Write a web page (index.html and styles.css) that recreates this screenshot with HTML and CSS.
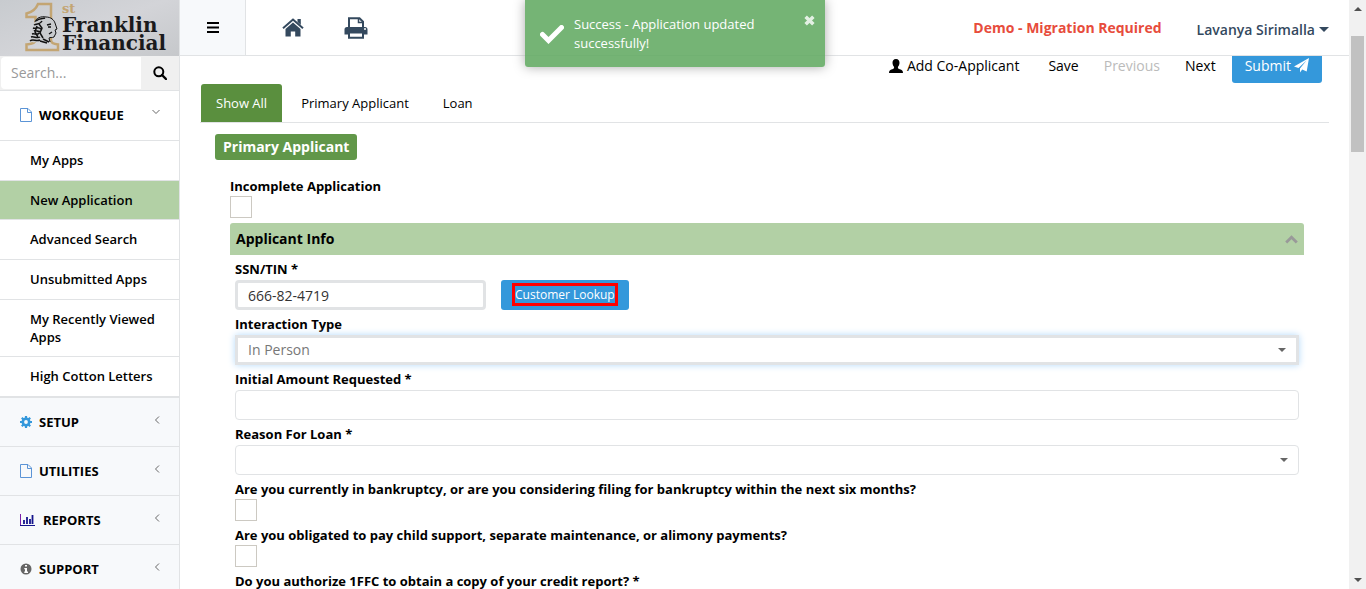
FILE: index.html
```html
<!DOCTYPE html>
<html lang="en">
<head>
<meta charset="utf-8">
<title>New Application</title>
<link rel="stylesheet" href="styles.css">
</head>
<body>
<svg class="sprite" aria-hidden="true">
  <symbol id="i-file" viewBox="0 0 12 14"><path d="M.5.5h7.500l3.500 3.500v9.500h-11z M7.500.5v4h4" fill="none" stroke="currentColor"/></symbol>
  <symbol id="i-left" viewBox="0 0 6 8"><path d="M5 .5L1.500 4 5 7.500" fill="none" stroke="currentColor"/></symbol>
  <symbol id="i-caret" viewBox="0 0 8 4"><path d="M0 0h8L4 4z" fill="currentColor"/></symbol>
</svg>
<div class="app">
  <aside class="sidebar">
    <a class="logo" href="#">
      <svg class="logo-mark" viewBox="0 0 35 50" aria-hidden="true">
        <path d="M1.500 11.500C6 10.500 11 7 13 2h13v36c0 3 2 4 7 4.500v5.500H1.500v-5.500c6-.5 9-1.500 9-4.500V15h-9z" fill="none" stroke="#c3a573" stroke-width="2.500"/>
        <path d="M10 20c1-4 6-6 11-5 5 0 9 3 9 7l2 5-2 1 1 3-2 4c-2 1-4 0-5 1l1 4c-4 2-9 0-12-1-3 2-7 2-7-1 1-2-1-3 1-5-1-2 1-4 0-6 1-2 1-5 3-7z" fill="#c9cbce"/>
        <path d="M10 20c1-4 6-6 11-5 5 0 8 3 9 6l2 6-2 1 1 3-2 4c-2 1-4 0-5 1l1 4" fill="none" stroke="#111"/>
        <path d="M11 19c3-3 7-2 9-3M9 23c3-2 6 0 8-4M8 26c3 1 5-2 8 1M9 29c2-2 4 2 7 0M7 32c3-1 5 2 7-1M6 35c3-1 6 2 9 0M5 39c3-3 6 1 10-1M14 22l3 4-2 5 3 5M12 24l-2 6 3 5M22 23l4-1M23 25h3M27 30l-3 2M18 37l6 3M15 39l7 2" fill="none" stroke="#111" stroke-width="1.500"/>
      </svg>
      <span class="logo-text"><span class="logo-st">st</span><span>Franklin</span><span>Financial</span></span>
    </a>
    <form class="search">
      <input class="search-input" type="text" placeholder="Search..." aria-label="Search">
      <button class="search-btn" type="button" aria-label="Search">
        <svg width="14" height="14" viewBox="0 0 14 14"><circle cx="5.800" cy="5.800" r="4.500" fill="none" stroke="#000" stroke-width="2"/><path d="M9 9l4 4" stroke="#000" stroke-width="2.400" stroke-linecap="round"/></svg>
      </button>
    </form>
    <nav class="menu">
      <a class="group open" href="#"><svg class="blue" width="12" height="14"><use href="#i-file"/></svg><span>WORKQUEUE</span>
        <svg class="chev" width="8" height="6" viewBox="0 0 8 6"><path d="M.5 1L4 4.500 7.500 1" fill="none" stroke="currentColor"/></svg></a>
      <div class="items">
        <a class="item" href="#">My Apps</a>
        <a class="item active" href="#">New Application</a>
        <a class="item" href="#">Advanced Search</a>
        <a class="item" href="#">Unsubmitted Apps</a>
        <a class="item" href="#">My Recently Viewed Apps</a>
        <a class="item" href="#">High Cotton Letters</a>
      </div>
      <a class="group" href="#"><svg class="cog" width="12" height="12" viewBox="0 0 12 12"><circle cx="6" cy="6" r="3.200" fill="none" stroke="currentColor" stroke-width="2.600"/><path d="M6 0v2.500M6 9.500V12M0 6h2.500M9.500 6H12M1.800 1.800l1.700 1.700M8.500 8.500l1.700 1.700M1.800 10.200l1.700-1.700M8.500 3.500l1.700-1.700" stroke="currentColor" stroke-width="2.200"/></svg><span>SETUP</span><svg class="chev" width="6" height="8"><use href="#i-left"/></svg></a>
      <a class="group" href="#"><svg class="blue" width="12" height="14"><use href="#i-file"/></svg><span>UTILITIES</span><svg class="chev" width="6" height="8"><use href="#i-left"/></svg></a>
      <a class="group" href="#"><svg class="navy" width="16" height="12" viewBox="0 0 16 12"><path d="M.5 0v11.500" stroke="#7a1fa8"/><path d="M0 11.500h15" stroke="currentColor"/><path d="M4 10V6M7 10V3M10 10V5M12.500 10V1" stroke="currentColor" stroke-width="1.800"/></svg><span>REPORTS</span><svg class="chev" width="6" height="8"><use href="#i-left"/></svg></a>
      <a class="group" href="#"><svg class="gray" width="12" height="12" viewBox="0 0 12 12"><circle cx="6" cy="6" r="5.500" fill="currentColor"/><path d="M5 2h2v1.600H5zM4.300 5H7v3.500h1V10H4.300V8.500H5V6.300h-.7z" fill="#fff"/></svg><span>SUPPORT</span><svg class="chev" width="6" height="8"><use href="#i-left"/></svg></a>
    </nav>
  </aside>

  <div class="main">
    <header class="topbar">
      <button class="burger" type="button" aria-label="Toggle menu"><svg width="12" height="11" viewBox="0 0 12 11"><path d="M0 1h12M0 5.500h12M0 10h12" stroke="#000" stroke-width="2"/></svg></button>
      <a class="top-icon" href="#" aria-label="Home"><svg width="22" height="19" viewBox="0 0 22 19"><path d="M15.500 1h3.300v6l-3.300-3z" fill="currentColor"/><path d="M1 10.200L11 1.600l10 8.600" fill="none" stroke="currentColor" stroke-width="2"/><path d="M11 4.500l7.500 6.400V18.500h-5.300v-5H8.800v5H3.500v-7.600z" fill="currentColor"/></svg></a>
      <a class="top-icon" href="#" aria-label="Print"><svg width="24" height="22" viewBox="0 0 24 22"><path d="M5 10V1.200h10.500L19 4.700V10" fill="none" stroke="currentColor" stroke-width="2"/><path d="M14.500 1v4.500H19" fill="none" stroke="currentColor" stroke-width="1.500"/><path d="M3 10h18a2.500 2.500 0 0 1 2.500 2.500V17.500H19V15H5v2.500H.5v-5A2.500 2.500 0 0 1 3 10z" fill="currentColor"/><circle cx="21" cy="12" r="1" fill="#fff"/><path d="M5 15.500h14v5.300H5z" fill="#fff" stroke="currentColor" stroke-width="2"/></svg></a>
      <strong class="env">Demo - Migration Required</strong>
      <button class="user" type="button">Lavanya Sirimalla <svg width="10" height="5"><use href="#i-caret"/></svg></button>
    </header>

    <div class="content">
      <div class="toolbar">
        <button class="tool add" type="button"><svg width="14" height="14" viewBox="0 0 14 14"><path d="M7 0c2.500 0 3.600 1.700 3.500 4-.1 2-1 3-1.600 4 0 1.500.5 1.800 2 2.300 2 .6 3.100 1.200 3.100 3.700H0c0-2.500 1.100-3.100 3.100-3.700 1.500-.5 2-.8 2-2.300-.6-1-1.500-2-1.600-4C3.400 1.700 4.500 0 7 0z"/></svg>Add Co-Applicant</button>
        <button class="tool" type="button">Save</button>
        <button class="tool" type="button" disabled>Previous</button>
        <button class="tool" type="button">Next</button>
        <button class="tool submit" type="button">Submit<svg width="15" height="15" viewBox="0 0 15 15"><path d="M15 0l-2.300 13.500-4.500-2L6 14.500v-4l6.500-8L4.500 10 0 8.500z" fill="#fff"/></svg></button>
      </div>
      <div class="tabs" role="tablist">
        <button class="tab active" role="tab" type="button">Show All</button>
        <button class="tab" role="tab" type="button">Primary Applicant</button>
        <button class="tab" role="tab" type="button">Loan</button>
      </div>
      <h1 class="badge">Primary Applicant</h1>
      <form class="form">
        <div class="field tick"><label for="inc">Incomplete Application</label><input class="check" id="inc" type="checkbox"></div>
        <section>
          <h2 class="panel-head">Applicant Info
            <svg width="13" height="9" viewBox="0 0 13 9"><path d="M1.200 7.500l5.300-5.300 5.300 5.300" fill="none" stroke="#999" stroke-width="2.800"/></svg></h2>
          <div class="panel">
            <div class="field"><label for="ssn">SSN/TIN *</label>
              <div class="lookup-row"><input class="control strong" id="ssn" type="text" value="666-82-4719"><button class="lookup" type="button"><span>Customer Lookup</span></button></div></div>
            <div class="field"><label for="int">Interaction Type</label>
              <div class="select-wrap"><select class="control strong focus" id="int"><option>In Person</option></select><svg class="caret inset" width="8" height="4"><use href="#i-caret"/></svg></div></div>
            <div class="field"><label for="amt">Initial Amount Requested *</label><input class="control" id="amt" type="text"></div>
            <div class="field"><label for="rsn">Reason For Loan *</label>
              <div class="select-wrap"><select class="control" id="rsn"><option></option></select><svg class="caret" width="8" height="4"><use href="#i-caret"/></svg></div></div>
            <div class="field tick"><label for="bk">Are you currently in bankruptcy, or are you considering filing for bankruptcy within the next six months?</label><input class="check" id="bk" type="checkbox"></div>
            <div class="field tick"><label for="cs">Are you obligated to pay child support, separate maintenance, or alimony payments?</label><input class="check" id="cs" type="checkbox"></div>
            <div class="field tick"><label for="cr">Do you authorize 1FFC to obtain a copy of your credit report? *</label><input class="check" id="cr" type="checkbox"></div>
          </div>
        </section>
      </form>
    </div>
  </div>

  <div class="scrollbar" aria-hidden="true">
    <svg class="up" width="8" height="4"><use href="#i-caret"/></svg>
    <div class="thumb"></div>
    <svg class="down" width="8" height="4"><use href="#i-caret"/></svg>
  </div>

  <div class="toast" role="status">
    <svg width="24" height="19" viewBox="0 0 24 19"><path d="M2.500 9.500l6 6L21.500 2.500" fill="none" stroke="#fff" stroke-width="5" stroke-linecap="round"/></svg>
    <p>Success - Application updated successfully!</p>
    <button class="toast-close" type="button" aria-label="Close"><svg width="11" height="11" viewBox="0 0 10 10"><path d="M1.500 1.500l7 7M8.500 1.500l-7 7" stroke="#fff" stroke-width="3.200"/></svg></button>
  </div>
</div>
</body>
</html>
```

FILE: styles.css
```css
* { box-sizing: border-box; }
body {
  margin: 0;
  font: 13px/18px "Open Sans", "Noto Sans", sans-serif;
  color: #000;
  background: #fff;
}
a { color: inherit; text-decoration: none; }
button, input, select { font: inherit; color: inherit; margin: 0; }
button { border: 0; background: none; padding: 0; cursor: pointer; }
svg { display: block; flex: none; }
.sprite { position: absolute; width: 0; height: 0; }

.app { position: relative; display: flex; height: 100vh; overflow: hidden; }

/* sidebar */
.sidebar {
  flex: none;
  width: 180px;
  background: #f7f9fb;
  border-right: 1px solid #e1e3e5;
  overflow: hidden;
}
.logo {
  display: flex;
  height: 56px;
  gap: 2px;
  padding: 2px 0 0 25px;
  background: linear-gradient(160deg, #c8cbcf, #d3d4d8 50%, #c6c8cb);
}
.logo-mark { width: 35px; height: 50px; }
.logo-text {
  display: flex;
  flex-direction: column;
  font: bold 20px/18px "DejaVu Serif", serif;
  color: #1a1a1c;
}
.logo-st { font-size: 13px; line-height: 14px; color: #c3a573; }
.search { display: flex; height: 35px; background: #f0f0f0; border-bottom: 1px solid #e1e3e5; }
.search-input {
  flex: 1;
  min-width: 0;
  margin: 1px 0 1px 1px;
  padding: 0 10px;
  border: 0;
  border-radius: 4px 0 0 4px;
  background: #fff;
  font-size: 14px;
}
.search-input::placeholder { color: #999; opacity: 1; }
.search-btn { width: 38px; display: grid; place-items: center; }

.group {
  display: flex;
  align-items: center;
  gap: 7px;
  height: 49px;
  padding: 0 19px 0 20px;
  border-bottom: 1px solid #e1e3e5;
  font-weight: 700;
}
.group.open { height: 50px; padding-bottom: 2px; background: #fff; }
.chev { margin: 0 0 5px auto; color: #666; }
.blue { color: #5b94d6; }
.cog { color: #3498db; }
.navy { color: #14148c; }
.gray { color: #666; }
.items {
  display: flex;
  flex-direction: column;
  min-height: 257px;
  background: #fff;
  border-bottom: 1px solid #e1e3e5;
}
.item {
  flex: 1 1 auto;
  padding: 10px 20px 10px 30px;
  border-bottom: 1px solid #e1e3e5;
  font-weight: 600;
}
.item.active { background: #b2d0a5; }

/* top bar */
.main { flex: 1; min-width: 0; display: flex; flex-direction: column; }
.topbar {
  flex: none;
  display: flex;
  align-items: center;
  height: 56px;
  padding-right: 20px;
  border-bottom: 1px solid #e1e3e5;
  color: #34495e;
}
.burger {
  display: grid;
  place-items: center;
  width: 66px;
  height: 55px;
  margin-right: 36px;
  background: #f7f9fb;
  border-right: 1px solid #e1e3e5;
}
.top-icon { margin-right: 40px; }
.env { margin-left: auto; margin-right: 35px; color: #e74c3c; font-size: 14px; }
.user { display: flex; align-items: center; gap: 4px; padding-top: 4px; font-size: 14px; font-weight: 600; }

/* content */
.content { flex: 1; min-height: 0; overflow: hidden; padding: 0 20px; }
.toolbar { display: flex; justify-content: flex-end; margin-top: -8px; padding-right: 7px; gap: 1px; }
.tool {
  display: flex;
  align-items: center;
  gap: 4px;
  height: 35px;
  padding: 0 12px;
  font-size: 14px;
}
.tool:disabled { color: #bbb; }
.add { margin-right: 4px; }
.submit {
  gap: 3px;
  margin-left: 3px;
  padding: 0 13px;
  background: #3498db;
  color: #fff;
  border-radius: 3px;
}
.tabs { display: flex; gap: 4px; border-bottom: 1px solid #e1e3e5; padding: 1px 0 0 1px; }
.tab { height: 38px; padding: 0 15px; }
.tab.active { background: #5a8f3e; color: #fff; border-radius: 3px 3px 0 0; }
.badge {
  width: fit-content;
  margin: 11px 0 17px 15px;
  padding: 4px 8px;
  border-radius: 3px;
  background: #619749;
  color: #fff;
  font-size: 14px;
  line-height: 18px;
}
.form { padding: 0 25px 0 30px; }
.field { display: flex; flex-direction: column; gap: 2px; padding-bottom: 5px; }
.field.tick { gap: 1px; }
.field label { font-weight: 700; }
.check {
  appearance: none;
  width: 22px;
  height: 22px;
  border: 1px solid #ccc9c2;
  background: #fff;
}
.panel-head {
  display: flex;
  align-items: center;
  justify-content: space-between;
  height: 32px;
  margin: 0 0 5px;
  padding: 0 6px;
  border-radius: 3px 3px 0 0;
  background: #b2d0a5;
  font-size: 14px;
}
.panel { padding: 0 5px; }
.control {
  display: block;
  width: 100%;
  height: 30px;
  padding: 0 12px;
  border: 1px solid #e1e3e5;
  border-radius: 4px;
  background: #fff;
  color: #333;
  font-size: 14px;
  appearance: none;
}
.control.strong { border-width: 3px; padding: 0 10px; }
.control.focus { border-radius: 0; color: #777; box-shadow: 0 0 7px #b4dafa; }
.lookup-row { display: flex; gap: 15px; }
.lookup-row .control { width: 251px; }
.lookup {
  display: grid;
  justify-items: center;
  align-items: start;
  height: 30px;
  padding: 3px 11px;
  border-radius: 3px;
  background: #3498db;
  color: #fff;
  font-size: 12px;
}
.lookup span { border: 3px solid #f00; line-height: 17px; }
.select-wrap { position: relative; }
.caret { position: absolute; right: 11px; top: 13px; color: #666; }
.caret.inset { right: 13px; }

/* window scrollbar */
.scrollbar {
  flex: none;
  display: flex;
  flex-direction: column;
  align-items: center;
  width: 17px;
  padding: 7px 0;
  background: #f1f1f1;
  color: #505050;
}
.up { transform: rotate(180deg); }
.thumb { width: 13px; height: 116px; margin-top: 25px; background: #c1c1c1; }
.down { margin-top: auto; }

/* notification */
.toast {
  position: absolute;
  top: 0;
  left: 525px;
  width: 300px;
  display: flex;
  align-items: center;
  gap: 10px;
  padding: 15px 10px 14px 15px;
  border-radius: 0 0 3px 3px;
  background: rgba(96, 169, 96, 0.87);
  color: #fff;
  box-shadow: 0 0 12px #aaa;
}
.toast p { flex: 1; margin: 0; line-height: 19px; }
.toast-close { align-self: flex-start; opacity: 0.8; }
```
